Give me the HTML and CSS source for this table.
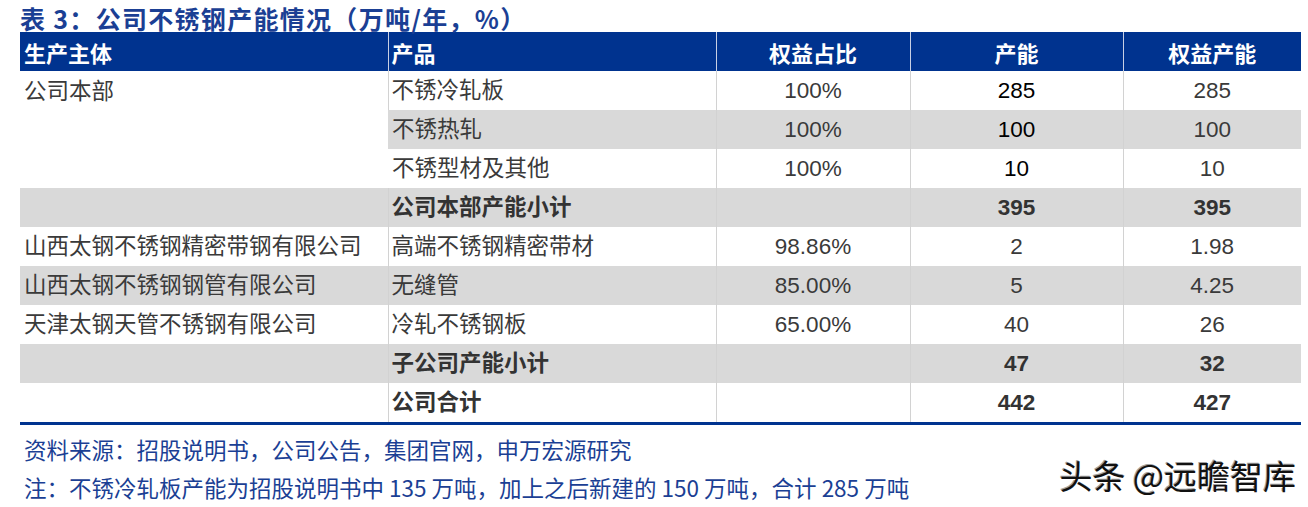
FILE: index.html
```html
<!DOCTYPE html>
<html lang="zh">
<head>
<meta charset="utf-8">
<title>表 3</title>
<link rel="stylesheet" href="styles.css">
</head>
<body>
<div class="page">
  <h1 class="title">表 3：公司不锈钢产能情况（万吨/年，%）</h1>
  <table class="cap">
    <colgroup>
      <col class="c1"><col class="c2"><col class="c3"><col class="c4"><col class="c5">
    </colgroup>
    <thead>
      <tr>
        <th class="left">生产主体</th>
        <th class="left">产品</th>
        <th>权益占比</th>
        <th>产能</th>
        <th>权益产能</th>
      </tr>
    </thead>
    <tbody>
      <tr>
        <td class="left top" rowspan="3">公司本部</td>
        <td class="left">不锈冷轧板</td>
        <td>100%</td>
        <td class="dark">285</td>
        <td>285</td>
      </tr>
      <tr class="gray">
        <td class="left">不锈热轧</td>
        <td>100%</td>
        <td class="dark">100</td>
        <td>100</td>
      </tr>
      <tr>
        <td class="left">不锈型材及其他</td>
        <td>100%</td>
        <td class="dark">10</td>
        <td>10</td>
      </tr>
      <tr class="gray bold">
        <td></td>
        <td class="left">公司本部产能小计</td>
        <td></td>
        <td>395</td>
        <td>395</td>
      </tr>
      <tr>
        <td class="left">山西太钢不锈钢精密带钢有限公司</td>
        <td class="left">高端不锈钢精密带材</td>
        <td>98.86%</td>
        <td>2</td>
        <td>1.98</td>
      </tr>
      <tr class="gray">
        <td class="left">山西太钢不锈钢钢管有限公司</td>
        <td class="left">无缝管</td>
        <td>85.00%</td>
        <td>5</td>
        <td>4.25</td>
      </tr>
      <tr>
        <td class="left">天津太钢天管不锈钢有限公司</td>
        <td class="left">冷轧不锈钢板</td>
        <td>65.00%</td>
        <td>40</td>
        <td>26</td>
      </tr>
      <tr class="gray bold">
        <td></td>
        <td class="left">子公司产能小计</td>
        <td></td>
        <td>47</td>
        <td>32</td>
      </tr>
      <tr class="bold last">
        <td></td>
        <td class="left">公司合计</td>
        <td></td>
        <td>442</td>
        <td>427</td>
      </tr>
    </tbody>
  </table>
  <div class="foot">
    <div class="notes">
      <p>资料来源：招股说明书，公司公告，集团官网，申万宏源研究</p>
      <p>注：不锈冷轧板产能为招股说明书中 135 万吨，加上之后新建的 150 万吨，合计 285 万吨</p>
    </div>
    <div class="mark">头条 @远瞻智库</div>
  </div>
</div>
</body>
</html>
```

FILE: styles.css
```css
html, body {
  margin: 0;
  padding: 0;
  background: #ffffff;
}
body {
  font-family: "Liberation Sans", "Noto Sans CJK SC", sans-serif;
}
.page {
  width: 1280px;
  padding: 0 0 0 20px;
}
.title {
  margin: 0;
  height: 32px;
  line-height: 36.5px;
  font-size: 25px;
  font-weight: bold;
  color: #1b3f94;
  font-family: "Noto Sans CJK SC", sans-serif;
  letter-spacing: 1.3px;
  white-space: nowrap;
}
.cap {
  width: 1281px;
  border-collapse: collapse;
  table-layout: fixed;
  font-size: 22.5px;
  color: #3a3a3a;
  border-bottom: 3px solid #00338f;
}
.c1 { width: 368px; }
.c2 { width: 328px; }
.c3 { width: 194px; }
.c4 { width: 213px; }
.c5 { width: 178px; }
.cap th {
  background: #00338f;
  color: #ffffff;
  font-weight: bold;
  font-size: 22px;
  height: 39px;
  padding: 0 3px;
  text-align: center;
  font-family: "Noto Sans CJK SC", sans-serif;
  line-height: 24px;
  border-left: 1px solid #c8d0e4;
}
.cap th:first-child { border-left: none; padding-left: 4px; }
.cap td {
  height: 39px;
  padding: 0 3px;
  text-align: center;
  line-height: 26px;
  border-left: 1px solid #d2d2d2;
  white-space: nowrap;
}
.cap td:first-child { border-left: none; padding-left: 4px; }
.cap .left { text-align: left; }
.cap td.top { vertical-align: top; padding-top: 8px; }
.cap tr.gray td { background: #d9d9d9; }
.cap tr.gray.bold td { border-left-color: #d9d9d9; }
.cap tr.gray.bold td:nth-child(2),
.cap tr.gray.bold td:nth-child(3),
.cap tr.gray.bold td:nth-child(4),
.cap tr.gray.bold td:nth-child(5) { border-left-color: #d2d2d2; }
.cap tr.bold td { font-weight: bold; color: #333333; }
.cap td.dark { color: #000000; }
.foot {
  display: flex;
  justify-content: space-between;
  align-items: flex-end;
  width: 1272px;
  padding-left: 4px;
}
.notes p {
  margin: 0;
  font-size: 22.5px;
  color: #1b3f94;
  font-family: "Noto Sans CJK SC", sans-serif;
}
.notes p:first-child {
  height: 42px;
  line-height: 48px;
}
.notes p + p {
  height: 40px;
  line-height: 40px;
}
.mark {
  font-family: "Noto Sans CJK SC", sans-serif;
  font-size: 33px;
  line-height: 40px;
  color: #111111;
  margin-bottom: 12px;
  text-shadow: 1px 1px 0 #ffffff, -1px -1px 0 #a0a0a0;
}
```
